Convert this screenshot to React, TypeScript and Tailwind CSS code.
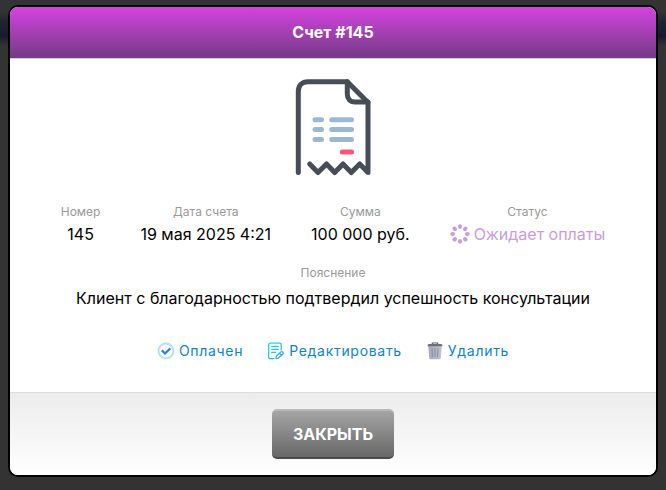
import React, { FC, PropsWithChildren } from "react";

type FieldProps = {
  label: string;
};

const InvoiceIcon: FC = () => (
  <svg viewBox="0 0 100 100" className="size-[100px]" fill="none" aria-hidden="true">
    <g stroke="#464d57" strokeWidth="5" strokeLinecap="round" strokeLinejoin="round">
      <path d="M15.3 95.5V14.5C15.3 8.5 19 4.7 25 4.7H64.3L85 25.5V95.5L76.7 87L68.3 95.5L60 87L51.7 95.5L43.5 87L35 95.5L26.7 87" />
      <path d="M64.3 4.7V17C64.3 22 67 25 72 25H85" />
    </g>
    <path
      d="M32 42.7H38.5M48.7 42.7H68.5M32 52.6H38.5M48.7 52.6H68.5M32 62.4H38.5M48.7 62.4H68.5"
      stroke="#9bb8d3"
      strokeWidth="5"
      strokeLinecap="round"
    />
    <path d="M59.3 75H68.5" stroke="#ff5576" strokeWidth="5" strokeLinecap="round" />
  </svg>
);

const SpinnerIcon: FC = () => (
  <svg viewBox="0 0 20 20" className="size-5" fill="#ca9cdc" aria-hidden="true">
    {[0, 45, 90, 135, 180, 225, 270, 315].map((angle) => (
      <ellipse key={angle} cx="10" cy="2.6" rx="2" ry="2.4" transform={`rotate(${angle} 10 10)`} />
    ))}
  </svg>
);

const CheckIcon: FC = () => (
  <svg viewBox="0 0 18 18" className="size-[18px]" fill="none" aria-hidden="true">
    <circle cx="9" cy="9" r="7.5" stroke="#bbdefb" strokeWidth="2" />
    <path d="M4.8 8.4L8 11.5L13.3 6.4" stroke="#1e88e5" strokeWidth="2.2" />
  </svg>
);

const EditIcon: FC = () => (
  <svg viewBox="0 0 18 18" className="size-[18px]" fill="none" aria-hidden="true">
    <defs>
      <linearGradient id="edit-stroke" x1="0" y1="0" x2="18" y2="18" gradientUnits="userSpaceOnUse">
        <stop stopColor="#10e5fc" />
        <stop offset="1" stopColor="#4a9cf0" />
      </linearGradient>
    </defs>
    <g stroke="url(#edit-stroke)" strokeWidth="1.3" strokeLinecap="round" strokeLinejoin="round">
      <path d="M7 16.6H3.5Q1.6 16.6 1.6 14.7V3Q1.6 1.2 3.5 1.2H12.3Q14.2 1.2 14.2 3V8" />
      <path d="M4.7 4.4H11.3M4.7 7.4H11.3M4.7 10.4H8.5" />
      <path d="M9 16.5L9.4 13.9L13.8 10Q15 9.2 16 10.3Q16.8 11.4 15.8 12.3L11.4 16.1L9 16.5ZM12.5 11.2L14.5 13.3" />
    </g>
  </svg>
);

const TrashIcon: FC = () => (
  <svg viewBox="0 0 18 18" className="size-[18px]" fill="none" aria-hidden="true">
    <defs>
      <linearGradient id="trash-body" x1="2" y1="0" x2="16" y2="0" gradientUnits="userSpaceOnUse">
        <stop stopColor="#a6aab8" />
        <stop offset="1" stopColor="#bfc2d0" />
      </linearGradient>
    </defs>
    <path d="M2.3 4H15.7L14.8 16Q14.7 17.3 13.4 17.3H4.6Q3.3 17.3 3.2 16Z" fill="url(#trash-body)" />
    <path d="M6 6.3L6.4 15M9 6.3V15M12 6.3L11.6 15" stroke="#85899a" />
    <path d="M6.3 2.4V1H11.7V2.4" stroke="#62646b" strokeWidth="1.2" />
    <path d="M3 2H15Q16.5 2 16.5 4.3H1.5Q1.5 2 3 2Z" fill="#6d6f76" />
  </svg>
);

const Field: FC<PropsWithChildren<FieldProps>> = ({ label, children }) => (
  <div>
    <dt className="text-xs leading-5 text-[#999999]">{label}</dt>
    <dd className="flex items-center justify-center gap-1 text-base">{children}</dd>
  </div>
);

const ActionLink: FC<PropsWithChildren> = ({ children }) => (
  <a href="#" className="flex items-center gap-1 text-sm tracking-wider text-[#0f83cc]">
    {children}
  </a>
);

const App: FC = () => {
  return (
    <div className="min-h-screen bg-[#333333] bg-[linear-gradient(to_bottom,#333333_12px,#20232f_22px,#171b2f_36px,#333333_46px)] px-2 font-['Inter',sans-serif]">
      {/* plain strip above the dialog */}
      <div className="-mx-2 h-[5px] bg-[#333333]" />
      <div
        role="dialog"
        aria-labelledby="invoice-title"
        className="overflow-hidden rounded-[10px] border-2 border-black bg-white text-center text-black"
      >
        <header className="border-b border-[#d0d0d0] bg-linear-to-b from-[#d641e1] to-[#733a86] py-[13px]">
          <h1 id="invoice-title" className="text-base leading-[25px] font-bold text-white">
            Счет #145
          </h1>
        </header>

        <main className="flex flex-col items-center px-6 pt-[18px] pb-[31px]">
          <InvoiceIcon />
          <dl className="mt-[25px] flex flex-wrap justify-center gap-x-10 gap-y-4">
            <Field label="Номер">145</Field>
            <Field label="Дата счета">19 мая 2025 4:21</Field>
            <Field label="Сумма">100 000 руб.</Field>
            <Field label="Статус">
              <SpinnerIcon />
              <span className="text-[#ca9cdc]">Ожидает оплаты</span>
            </Field>
          </dl>
          <dl className="mt-[17px] [&_dd]:mt-[3px]">
            <Field label="Пояснение">Клиент с благодарностью подтвердил успешность консультации</Field>
          </dl>
          <nav className="mt-[31px] flex flex-wrap justify-center gap-6">
            <ActionLink>
              <CheckIcon />
              Оплачен
            </ActionLink>
            <ActionLink>
              <EditIcon />
              Редактировать
            </ActionLink>
            <ActionLink>
              <TrashIcon />
              Удалить
            </ActionLink>
          </nav>
        </main>

        <footer className="border-t border-[#dddddd] bg-linear-to-b from-[#ececec] to-white py-4">
          <button
            type="button"
            className="h-[50px] min-w-[122px] rounded-[5px] border-t-2 border-b-2 border-t-[#b9b9b9] border-b-[#4c4c4c] bg-linear-to-b from-[#a5a5a5] to-[#686868] px-5 text-base font-bold text-white"
          >
            ЗАКРЫТЬ
          </button>
        </footer>
      </div>
    </div>
  );
};

export default App;
